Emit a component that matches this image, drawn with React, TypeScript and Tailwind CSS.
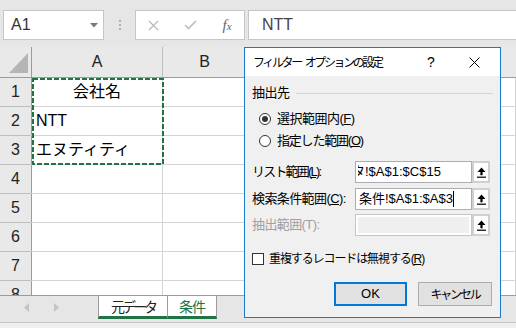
import React from "react";

const UI = "font-['Liberation_Sans','Noto_Sans_CJK_JP',sans-serif]";

const UploadBtn = () => (
  <div className="w-[18px] h-[22px] bg-[#d0d0d0] p-[2px] flex">
    <div className="flex-1 bg-white flex items-center justify-center">
      <svg width="9" height="11" viewBox="0 0 9 11">
        <path d="M4.5 0.5 L8.5 5 L5.6 5 L5.6 8.3 L3.4 8.3 L3.4 5 L0.5 5 Z" fill="#000" />
        <rect x="0" y="9.6" width="9" height="1.2" fill="#000" />
      </svg>
    </div>
  </div>
);

const rowNums = [1, 2, 3, 4, 5, 6, 7, 8];

function Cell({ w, children, className = "" }: { w: string; children?: React.ReactNode; className?: string }) {
  return <div className={`${w} h-full shrink-0 border-r border-[#d4d4d4] flex items-center ${className}`}>{children}</div>;
}

export default function App() {
  return (
    <div className={`w-[516px] h-[328px] overflow-hidden bg-[#e6e6e6] relative flex flex-col ${UI}`}>
      {/* Formula bar */}
      <div className="h-[47px] shrink-0 flex items-start pt-[10px] pl-[3px]">
        <div className="w-[101px] h-[30px] border border-[#c6c6c6] bg-white flex items-center justify-between pl-[7px] pr-[5px]">
          <span className="text-[16px] text-[#333] font-['Liberation_Sans',sans-serif]">A1</span>
          <svg width="8" height="5" viewBox="0 0 8 5">
            <path d="M0 0 L8 0 L4 4.5 Z" fill="#7a7a7a" />
          </svg>
        </div>
        <div className="w-[31px] h-[30px] flex flex-col items-center justify-center gap-[2px]">
          <div className="w-[2px] h-[2px] bg-[#b0b0b0]" />
          <div className="w-[2px] h-[2px] bg-[#b0b0b0]" />
          <div className="w-[2px] h-[2px] bg-[#b0b0b0]" />
        </div>
        <div className="w-[110px] h-[30px] border border-[#c6c6c6] bg-white flex items-center">
          <div className="w-[34px] flex justify-center">
            <svg width="11" height="11" viewBox="0 0 11 11">
              <path d="M1 1 L10 10 M10 1 L1 10" stroke="#bdbdbd" strokeWidth="1.4" />
            </svg>
          </div>
          <div className="w-[40px] flex justify-center">
            <svg width="13" height="10" viewBox="0 0 13 10">
              <path d="M1 5 L4.5 8.5 L12 1" stroke="#bdbdbd" strokeWidth="1.6" fill="none" />
            </svg>
          </div>
          <div className="w-[34px] flex justify-center items-baseline font-['Liberation_Serif',serif] italic text-[#666]">
            <span className="text-[15px]">f</span>
            <span className="text-[11px]">x</span>
          </div>
        </div>
        <div className="ml-[3px] flex-1 h-[30px] border border-[#c6c6c6] border-r-0 bg-white flex items-center pl-[13px]">
          <span className="text-[16px] text-[#444] font-['Liberation_Sans',sans-serif]">NTT</span>
        </div>
      </div>

      {/* Grid */}
      <div className="h-[248px] shrink-0 relative overflow-hidden bg-white">
        <div className="h-[31px] flex bg-[#e9e9e9] border-b border-[#9b9b9b]">
          <div className="w-[32px] h-full shrink-0 border-r border-[#9b9b9b] relative">
            <svg className="absolute left-0 top-0" width="31" height="30" viewBox="0 0 31 30">
              <path d="M28 6 L28 26 L9 26 Z" fill="#b5b5b5" />
            </svg>
          </div>
          <div className="w-[131px] h-full shrink-0 border-r border-[#bdbdbd] flex items-center justify-center text-[16px] text-[#222] font-['Liberation_Sans',sans-serif]">A</div>
          <div className="w-[84px] h-full shrink-0 border-r border-[#bdbdbd] flex items-center justify-center text-[16px] text-[#222] font-['Liberation_Sans',sans-serif]">B</div>
          <div className="w-[84px] h-full shrink-0 border-r border-[#bdbdbd] flex items-center justify-center text-[16px] text-[#222] font-['Liberation_Sans',sans-serif]">C</div>
          <div className="w-[84px] h-full shrink-0 border-r border-[#bdbdbd] flex items-center justify-center text-[16px] text-[#222] font-['Liberation_Sans',sans-serif]">D</div>
          <div className="w-[101px] h-full shrink-0 flex items-center justify-center text-[16px] text-[#222]">E</div>
        </div>
        {rowNums.map((n) => (
          <div key={n} className="h-[29px] flex border-b border-[#d4d4d4]">
            <div className="w-[32px] h-full shrink-0 bg-[#e9e9e9] border-r border-[#9b9b9b] flex items-center justify-center text-[16px] text-[#222] font-['Liberation_Sans',sans-serif] relative">
              {n}
              <div className="absolute left-0 right-0 bottom-[-1px] h-[1px] bg-[#bdbdbd]" />
            </div>
            <Cell
              w="w-[131px]"
              className={`text-[16px] text-black font-['Liberation_Sans','Noto_Sans_CJK_JP',sans-serif] ${n === 1 ? "justify-center" : "pl-[4px]"}`}
            >
              {n === 1 ? "会社名" : n === 2 ? "NTT" : n === 3 ? "エヌティティ" : ""}
            </Cell>
            <Cell w="w-[84px]" />
            <Cell w="w-[84px]" />
            <Cell w="w-[84px]" />
            <Cell w="w-[101px]" />
          </div>
        ))}
        <svg className="absolute left-[31px] top-[30px]" width="134" height="89" viewBox="0 0 134 89">
          <rect x="2" y="2" width="130" height="85" fill="none" stroke="#217346" strokeWidth="2" strokeDasharray="5 2" />
        </svg>
      </div>

      {/* Sheet tabs */}
      <div className="h-[33px] shrink-0 flex flex-col">
        <div className="h-[1px] bg-[#9b9b9b]" />
        <div className="h-[23px] flex">
          <div className="w-[98px] flex items-center">
            <svg className="ml-[24px]" width="5" height="9" viewBox="0 0 5 9">
              <path d="M5 0 L0 4.5 L5 9 Z" fill="#c3c3c3" />
            </svg>
            <svg className="ml-[25px]" width="5" height="9" viewBox="0 0 5 9">
              <path d="M0 0 L5 4.5 L0 9 Z" fill="#c3c3c3" />
            </svg>
          </div>
          <div className="w-[69px] bg-white border-l border-[#9b9b9b] border-b-[3px] border-b-[#217346] flex items-center justify-center text-[14px] tracking-[-3px] text-[#222] font-['Noto_Sans_CJK_JP',sans-serif]">
            元データ
          </div>
          <div className="w-[50px] bg-white border-l border-r border-[#9b9b9b] border-b-[3px] border-b-[#217346] flex items-center justify-center text-[14px] tracking-[-1px] text-[#217346] font-['Noto_Sans_CJK_JP',sans-serif]">
            条件
          </div>
        </div>
        <div className="h-[3px]" />
        <div className="h-[1px] bg-[#c6c6c6]" />
        <div className="flex-1 bg-[#f0f0f0]" />
      </div>

      {/* Dialog */}
      <div className="absolute left-[244px] top-[47px] w-[257px] h-[271px] border border-[#1979ca] bg-[#f0f0f0] flex flex-col">
        <div className="h-[28px] shrink-0 bg-white flex items-center pl-[8px]">
          <div className="flex-1 flex gap-[4px] text-[12px] tracking-[-2.4px] text-black font-['Noto_Sans_CJK_JP',sans-serif]">
            <span>フィルター</span>
            <span>オプションの設定</span>
          </div>
          <span className="w-[30px] text-center text-[14px] text-black">?</span>
          <div className="ml-[10px] mr-[8px] w-[36px] flex justify-center">
            <svg width="11" height="11" viewBox="0 0 11 11">
              <path d="M0.5 0.5 L10.5 10.5 M10.5 0.5 L0.5 10.5" stroke="#000" strokeWidth="1" />
            </svg>
          </div>
        </div>

        <div className="flex-1 px-[7px] flex flex-col text-[13px] text-black">
          <div className="mt-[8px] h-[18px] flex items-center">
            <span className="tracking-[-0.5px]">抽出先</span>
            <div className="ml-[6px] flex-1 h-[1px] bg-[#d5d5d5]" />
          </div>

          <div className="mt-[6px] h-[22px] flex items-center pl-[7px]">
            <div className="w-[12px] h-[12px] rounded-full border border-[#333] bg-white flex items-center justify-center">
              <div className="w-[6px] h-[6px] rounded-full bg-[#333]" />
            </div>
            <span className="ml-[6px] tracking-[-0.5px]">
              選択範囲内(<span className="underline">F</span>)
            </span>
          </div>
          <div className="h-[22px] flex items-center pl-[7px]">
            <div className="w-[12px] h-[12px] rounded-full border border-[#333] bg-white" />
            <span className="ml-[6px] tracking-[-1.2px]">
              指定した範囲(<span className="underline">O</span>)
            </span>
          </div>

          <div className="mt-[9px] h-[22px] flex items-center">
            <span className="w-[103px] tracking-[-1.8px]">
              リスト範囲(<span className="underline">L</span>):
            </span>
            <div className="w-[117px] h-[22px] border border-[#adadad] bg-white flex items-center pl-[2px]">
              <div className="flex-1 overflow-hidden whitespace-nowrap">
                <span className="ml-[-6px]">タ!$A$1:$C$15</span>
              </div>
            </div>
            <UploadBtn />
          </div>
          <div className="mt-[5px] h-[22px] flex items-center">
            <span className="w-[103px] tracking-[-0.6px]">
              検索条件範囲(<span className="underline">C</span>):
            </span>
            <div className="w-[117px] h-[22px] border border-[#adadad] bg-white flex items-center pl-[3px]">
              <span className="whitespace-nowrap">条件!$A$1:$A$3</span>
              <div className="w-[1px] h-[16px] bg-black" />
            </div>
            <UploadBtn />
          </div>
          <div className="mt-[4px] h-[22px] flex items-center">
            <span className="w-[103px] tracking-[-0.6px] text-[#a0a0a0]">抽出範囲(T):</span>
            <div className="w-[117px] h-[22px] border border-[#c6c6c6] bg-white p-[2px] flex">
              <div className="flex-1 bg-[#efefef]" />
            </div>
            <UploadBtn />
          </div>

          <div className="mt-[16px] h-[14px] flex items-center">
            <div className="w-[12px] h-[12px] border border-[#333] bg-white" />
            <span className="ml-[5px] text-[12px] tracking-[-1.1px]">
              重複するレコードは無視する(<span className="underline">R</span>)
            </span>
          </div>

          <div className="mt-[16px] h-[24px] flex justify-end gap-[11px] pr-[1px]">
            <div className="w-[73px] h-[24px] border-2 border-[#0078d7] bg-[#e1e1e1] flex items-center justify-center text-[13px]">OK</div>
            <div className="w-[74px] h-[24px] border border-[#adadad] bg-[#e1e1e1] flex items-center justify-center text-[12px] tracking-[-2.2px] font-['Noto_Sans_CJK_JP',sans-serif]">
              キャンセル
            </div>
          </div>
        </div>
      </div>
    </div>
  );
}
